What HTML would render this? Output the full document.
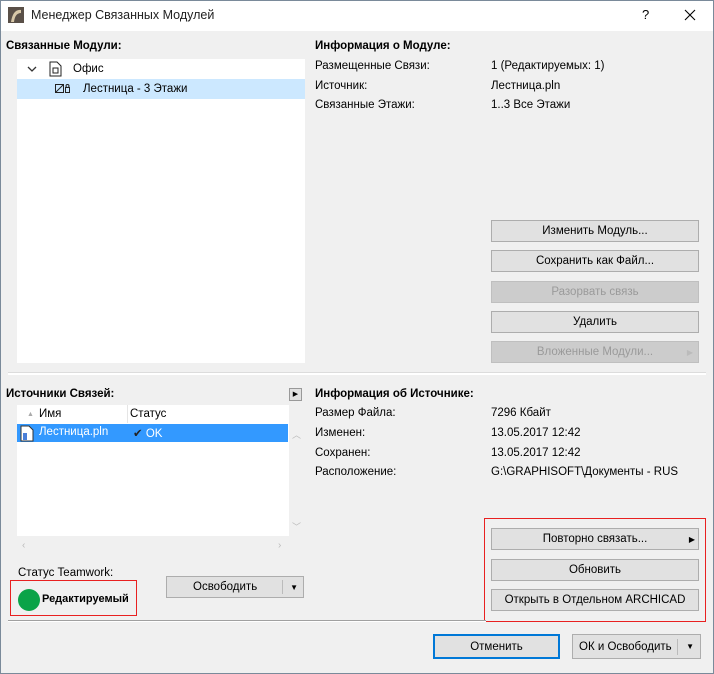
<!DOCTYPE html>
<html><head><meta charset="utf-8"><style>
*{box-sizing:border-box;margin:0;padding:0}
body{width:714px;height:674px;background:#f0f0f0;font-family:"Liberation Sans",sans-serif;font-size:11.5px;color:#000;position:relative;overflow:hidden}
.a{position:absolute;white-space:nowrap}
.frame{position:absolute;left:0;top:0;width:714px;height:674px;border:1px solid #7a8a9a;pointer-events:none}
.btn{position:absolute;background:#e1e1e1;border:1px solid #adadad;text-align:center;line-height:21px;font-size:11.5px}
.dis{color:#9a9a9a;background:#ccc;border-color:#bfbfbf}
.b{font-weight:bold;font-size:11.5px}
</style></head><body>
<div class="a" style="left:0;top:0;width:714px;height:31px;background:#fff"></div>
<svg class="a" style="left:8px;top:7px" width="16" height="16"><rect width="16" height="16" fill="#5a5048"/><path d="M3 15 Q5 2 13 3 L13 6 Q7 6 6 15Z" fill="#d8c8a8"/></svg>
<div class="a" style="left:31px;top:8px;font-size:12.5px;color:#222">Менеджер Связанных Модулей</div>
<div class="a" style="left:642px;top:7px;font-size:13px">?</div>
<svg class="a" style="left:684px;top:9px" width="12" height="12"><path d="M1 1L11 11M11 1L1 11" stroke="#000" stroke-width="1.1"/></svg>

<div class="a b" style="left:6px;top:40px">Связанные Модули:</div>
<div class="a" style="left:17px;top:59px;width:288px;height:304px;background:#fff"></div>
<svg class="a" style="left:27px;top:66px" width="10" height="8"><path d="M1 1L5 5L9 1" stroke="#333" fill="none" stroke-width="1.3"/></svg>
<svg class="a" style="left:49px;top:61px" width="13" height="16"><path d="M1 1H8L12 5V15H1Z" fill="none" stroke="#222"/><rect x="4" y="7" width="5" height="5" fill="none" stroke="#222"/></svg>
<div class="a" style="left:73px;top:63px">Офис</div>
<div class="a" style="left:17px;top:79px;width:288px;height:20px;background:#cce8ff"></div>
<svg class="a" style="left:55px;top:84px" width="16" height="10"><rect x="0.5" y="0.5" width="8" height="8" fill="none" stroke="#222"/><path d="M1 8L8 1" stroke="#222"/><rect x="10.5" y="3.5" width="4" height="5" fill="none" stroke="#222"/><circle cx="12.5" cy="2" r="1.5" fill="none" stroke="#222"/></svg>
<div class="a" style="left:83px;top:83px">Лестница - 3 Этажи</div>

<div class="a b" style="left:315px;top:40px">Информация о Модуле:</div>
<div class="a" style="left:315px;top:60px">Размещенные Связи:</div>
<div class="a" style="left:491px;top:60px">1 (Редактируемых: 1)</div>
<div class="a" style="left:315px;top:80px">Источник:</div>
<div class="a" style="left:491px;top:80px">Лестница.pln</div>
<div class="a" style="left:315px;top:99px">Связанные Этажи:</div>
<div class="a" style="left:491px;top:99px">1..3 Все Этажи</div>

<div class="btn" style="left:491px;top:220px;width:208px;height:22px">Изменить Модуль...</div>
<div class="btn" style="left:491px;top:250px;width:208px;height:22px">Сохранить как Файл...</div>
<div class="btn dis" style="left:491px;top:281px;width:208px;height:22px">Разорвать связь</div>
<div class="btn" style="left:491px;top:311px;width:208px;height:22px">Удалить</div>
<div class="btn dis" style="left:491px;top:341px;width:208px;height:22px">Вложенные Модули...<span style="position:absolute;right:5px;top:0;font-size:8px;color:#bbb">▶</span></div>

<div class="a" style="left:8px;top:372px;width:698px;height:1px;background:#dcdcdc"></div>
<div class="a" style="left:8px;top:373px;width:698px;height:2px;background:#fff"></div>

<div class="a b" style="left:6px;top:388px">Источники Связей:</div>
<div class="a" style="left:289px;top:388px;width:13px;height:13px;border:1px solid #999;background:#e1e1e1;font-size:7px;line-height:11px;text-align:center">▶</div>
<div class="a" style="left:17px;top:405px;width:272px;height:131px;background:#fff"></div>
<div class="a" style="left:27px;top:411px;font-size:7px;color:#aaa">▲</div>
<div class="a" style="left:39px;top:408px">Имя</div>
<div class="a" style="left:127px;top:405px;width:1px;height:18px;background:#e5e5e5"></div>
<div class="a" style="left:130px;top:408px">Статус</div>
<div class="a" style="left:17px;top:424px;width:271px;height:18px;background:#3399ff"></div>
<svg class="a" style="left:20px;top:425px" width="14" height="17"><path d="M1 1H9L13 5V16H1Z" fill="#fff" stroke="#333"/><path d="M3 15V8L7 8V15" fill="#4a7fd8"/></svg>
<div class="a" style="left:39px;top:426px;color:#fff">Лестница.pln</div>
<div class="a" style="left:133px;top:426px;color:#fff"><span style="color:#222">✔</span> OK</div>
<div class="a" style="left:292px;top:428px;font-size:9px;color:#bbb">︿</div>
<div class="a" style="left:292px;top:520px;font-size:9px;color:#bbb">﹀</div>
<div class="a" style="left:22px;top:540px;font-size:10px;color:#bbb">‹</div>
<div class="a" style="left:278px;top:540px;font-size:10px;color:#bbb">›</div>

<div class="a" style="left:18px;top:567px">Статус Teamwork:</div>
<div class="a" style="left:10px;top:580px;width:127px;height:36px;border:1px solid #e82020"></div>
<div class="a" style="left:18px;top:589px;width:22px;height:22px;border-radius:50%;background:#0aa348"></div>
<div class="a b" style="left:42px;top:593px;font-size:11px">Редактируемый</div>
<div class="btn" style="left:166px;top:576px;width:138px;height:22px;text-align:left;padding-left:26px">Освободить<span style="position:absolute;left:115px;top:3px;width:1px;height:14px;background:#bbb"></span><span style="position:absolute;right:5px;top:0;font-size:8px">▼</span></div>

<div class="a b" style="left:315px;top:388px">Информация об Источнике:</div>
<div class="a" style="left:315px;top:407px">Размер Файла:</div>
<div class="a" style="left:491px;top:407px">7296 Кбайт</div>
<div class="a" style="left:315px;top:427px">Изменен:</div>
<div class="a" style="left:491px;top:427px">13.05.2017 12:42</div>
<div class="a" style="left:315px;top:447px">Сохранен:</div>
<div class="a" style="left:491px;top:447px">13.05.2017 12:42</div>
<div class="a" style="left:315px;top:466px">Расположение:</div>
<div class="a" style="left:491px;top:466px">G:\GRAPHISOFT\Документы - RUS</div>

<div class="a" style="left:484px;top:518px;width:222px;height:104px;border:1px solid #e82020"></div>
<div class="btn" style="left:491px;top:528px;width:208px;height:22px">Повторно связать...<span style="position:absolute;right:3px;top:0;font-size:8px">▶</span></div>
<div class="btn" style="left:491px;top:559px;width:208px;height:22px">Обновить</div>
<div class="btn" style="left:491px;top:589px;width:208px;height:22px">Открыть в Отдельном ARCHICAD</div>

<div class="a" style="left:8px;top:620px;width:478px;height:1px;background:#a0a0a0"></div>
<div class="a" style="left:8px;top:621px;width:478px;height:1px;background:#fff"></div>

<div class="btn" style="left:433px;top:634px;width:127px;height:25px;border:2px solid #0078d7;line-height:22px">Отменить</div>
<div class="btn" style="left:572px;top:634px;width:129px;height:25px;line-height:24px;text-align:left;padding-left:6px">ОК и Освободить<span style="position:absolute;left:104px;top:4px;width:1px;height:16px;background:#bbb"></span><span style="position:absolute;right:6px;top:0;font-size:8px">▼</span></div>
<div class="frame"></div>
</body></html>
